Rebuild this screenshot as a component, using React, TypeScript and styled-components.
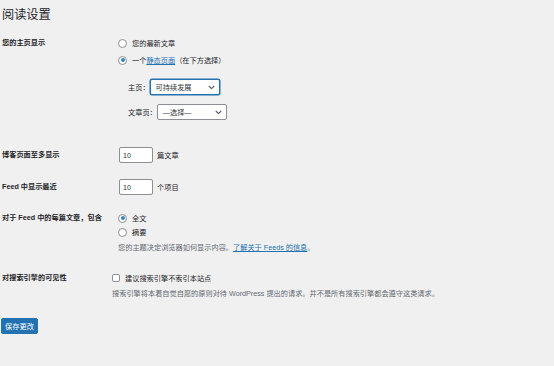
import styled, { createGlobalStyle } from "styled-components";

const GlobalStyle = createGlobalStyle`
  html, body {
    margin: 0;
    padding: 0;
    background: #f0f0f1;
  }
  body {
    font-family: "Liberation Sans", "Noto Sans CJK SC", sans-serif;
    color: #1d2327;
    font-size: 7.2px;
  }
`;

const Wrap = styled.div`
  width: 554px;
  height: 366px;
  padding: 5px 0 0 1px;
  box-sizing: border-box;
  overflow: hidden;
`;

const Title = styled.h1`
  margin: 0 0 0 1px;
  font-size: 12.2px;
  line-height: 20px;
  font-weight: 400;
  color: #1d2327;
`;

const Row = styled.div<{ $gap: number }>`
  display: grid;
  grid-template-columns: 111px 1fr;
  margin-top: ${(p) => p.$gap}px;
`;

const Label = styled.div<{ $h?: number }>`
  padding-left: 1px;
  font-weight: 700;
  line-height: ${(p) => p.$h ?? 16}px;
  white-space: nowrap;
`;

const Field = styled.div<{ $inset?: number }>`
  padding-left: ${(p) => p.$inset ?? 0}px;
  display: flex;
  flex-direction: column;
`;

const Line = styled.label<{ $h: number; $mt?: number }>`
  display: flex;
  align-items: center;
  height: ${(p) => p.$h}px;
  margin-top: ${(p) => p.$mt ?? 0}px;
  white-space: nowrap;
`;

const Radio = styled.input.attrs({ type: "radio" })`
  appearance: none;
  margin: 0 5px 0 0;
  width: 9px;
  height: 9px;
  border: 1px solid #8c8f94;
  border-radius: 50%;
  background: #fff;
  box-sizing: border-box;
  display: grid;
  place-items: center;
  &:checked::before {
    content: "";
    width: 4px;
    height: 4px;
    border-radius: 50%;
    background: #3582c4;
  }
`;

const Check = styled.input.attrs({ type: "checkbox" })`
  appearance: none;
  margin: 0 5px 0 0;
  width: 8px;
  height: 8px;
  border: 1px solid #8c8f94;
  border-radius: 2px;
  background: #fff;
  box-sizing: border-box;
`;

const Link = styled.a`
  color: #2271b1;
  text-decoration: underline;
`;

const PickRow = styled.div<{ $mt: number }>`
  display: flex;
  align-items: center;
  margin-top: ${(p) => p.$mt}px;
  padding-left: 10px;
`;

const SelectBox = styled.div<{ $focus?: boolean; $w: number }>`
  width: ${(p) => p.$w}px;
  height: 16px;
  box-sizing: border-box;
  border: 1px solid ${(p) => (p.$focus ? "#2271b1" : "#8c8f94")};
  box-shadow: ${(p) => (p.$focus ? "0 0 0 0.5px #2271b1" : "none")};
  border-radius: 2px;
  background: #fff;
  display: flex;
  align-items: center;
  justify-content: space-between;
  padding: 0 4px 0 5px;
  color: #2c3338;
`;

const NumInput = styled.input`
  width: 34px;
  height: 16px;
  box-sizing: border-box;
  border: 1px solid #8c8f94;
  border-radius: 2px;
  background: #fff;
  padding: 0 0 0 3px;
  margin: 0 4px 0 0;
  font: inherit;
  color: #2c3338;
`;

const Desc = styled.p<{ $mt: number }>`
  margin: ${(p) => p.$mt}px 0 0;
  line-height: 12px;
  color: #646970;
  white-space: nowrap;
`;

const SaveButton = styled.button`
  margin-top: 18px;
  width: 37px;
  height: 16px;
  padding: 0;
  border: 1px solid #2271b1;
  border-radius: 2px;
  background: #2271b1;
  color: #fff;
  font: inherit;
`;

const Chevron = () => (
  <svg width="7" height="5" viewBox="0 0 7 5" fill="none">
    <path d="M0.8 1 L3.5 3.6 L6.2 1" stroke="#50575e" strokeWidth="1.1" />
  </svg>
);

export default function App() {
  return (
    <Wrap>
      <GlobalStyle />
      <Title>阅读设置</Title>

      <Row $gap={10}>
        <Label>您的主页显示</Label>
        <Field $inset={6}>
          <Line $h={16}>
            <Radio name="front" />
            您的最新文章
          </Line>
          <Line $h={16} $mt={1}>
            <Radio name="front" defaultChecked />
            一个<Link href="#">静态页面</Link>（在下方选择）
          </Line>
          <PickRow $mt={11}>
            主页：
            <SelectBox $focus $w={70}>
              可持续发展
              <Chevron />
            </SelectBox>
          </PickRow>
          <PickRow $mt={9}>
            文章页：
            <SelectBox $w={70}>
              —选择—
              <Chevron />
            </SelectBox>
          </PickRow>
        </Field>
      </Row>

      <Row $gap={27}>
        <Label>博客页面至多显示</Label>
        <Field $inset={7}>
          <Line $h={16}>
            <NumInput defaultValue="10" />
            篇文章
          </Line>
        </Field>
      </Row>

      <Row $gap={16}>
        <Label>Feed 中显示最近</Label>
        <Field $inset={7}>
          <Line $h={16}>
            <NumInput defaultValue="10" />
            个项目
          </Line>
        </Field>
      </Row>

      <Row $gap={16}>
        <Label $h={14}>对于 Feed 中的每篇文章，包含</Label>
        <Field $inset={6}>
          <Line $h={14}>
            <Radio name="feed" defaultChecked />
            全文
          </Line>
          <Line $h={14}>
            <Radio name="feed" />
            摘要
          </Line>
          <Desc $mt={3}>
            您的主题决定浏览器如何显示内容。<Link href="#">了解关于 Feeds 的信息</Link>。
          </Desc>
        </Field>
      </Row>

      <Row $gap={17}>
        <Label $h={14}>对搜索引擎的可见性</Label>
        <Field>
          <Line $h={14}>
            <Check />
            建议搜索引擎不索引本站点
          </Line>
          <Desc $mt={3}>
            搜索引擎将本着自觉自愿的原则对待 WordPress 提出的请求。并不是所有搜索引擎都会遵守这类请求。
          </Desc>
        </Field>
      </Row>

      <SaveButton>保存更改</SaveButton>
    </Wrap>
  );
}
